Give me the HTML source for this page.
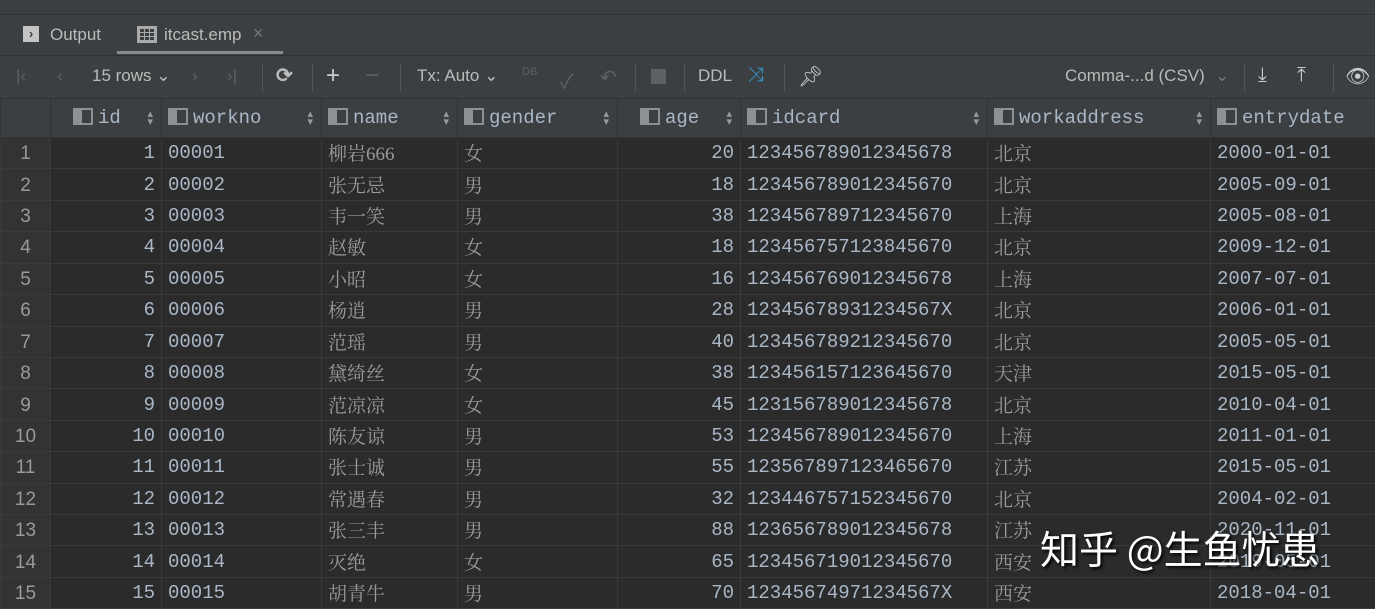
<!DOCTYPE html>
<html><head><meta charset="utf-8"><style>
*{margin:0;padding:0;box-sizing:border-box}
body{width:1375px;height:608px;background:#3c3f41;overflow:hidden;position:relative;font-family:"Liberation Sans","Noto Sans CJK SC",sans-serif;color:#a9b7c6}
.a{position:absolute}
.hl{position:absolute;left:0;width:1375px;height:1px;background:#323232}
.tb{font-size:17px;color:#bbbbbb;top:66px}
.sep{position:absolute;top:64px;width:1px;height:28px;background:#555}
table{position:absolute;left:0;top:98px;border-collapse:collapse;table-layout:fixed;width:1379px;font-family:"Liberation Mono","Noto Sans CJK SC",monospace;font-size:19px}
td,th{height:31.43px;border:1px solid #3a3a3a;padding:0 6px;white-space:nowrap;overflow:hidden;line-height:20px}
th{height:39px;background:#3c3f41;color:#a9b7c6;font-weight:normal;text-align:left;border-color:#333;position:relative}
td{background:#2b2b2b;color:#a9b7c6;padding-top:0}
td.g{background:#313335;text-align:center;padding:2px 0 0;color:#9a9a9a;font-family:"Liberation Sans",sans-serif;font-size:19px}
td.r{text-align:right}
td.c{font-family:"Liberation Serif","Noto Serif CJK SC",serif;color:#9a9a9a;padding-top:4px}
.ic{display:inline-block;width:20px;height:17px;vertical-align:-2px;margin-right:5px;background:linear-gradient(90deg,#8c9196 0 7px,transparent 7px);border:2px solid #8c9196}
.s{position:absolute;right:8px;top:12px;font-size:11px;color:#999;line-height:8px}
</style></head><body>
<div class="hl" style="top:14px;background:#2f3133"></div>
<div class="a" style="left:23px;top:26px;width:16px;height:16px;background:#c4c4c4;color:#3c3f41;font-size:13px;font-weight:bold;line-height:16px;text-align:center">›</div>
<div class="a" style="left:50px;top:25px;font-size:17px;color:#bbb">Output</div>
<div class="a" style="left:137px;top:26px;width:20px;height:17px;border:2px solid #aaa;background:repeating-linear-gradient(0deg,#aaa 0 1px,transparent 1px 4px),repeating-linear-gradient(90deg,#aaa 0 1px,transparent 1px 5px)"></div>
<div class="a" style="left:164px;top:25px;font-size:17px;color:#bbb">itcast.emp</div>
<div class="a" style="left:253px;top:23px;font-size:18px;color:#777">×</div>
<div class="a" style="left:117px;top:51px;width:166px;height:3px;background:#8a8d90"></div>
<div class="hl" style="top:55px"></div>
<div class="a tb" style="left:16px;color:#5e6163">|‹</div>
<div class="a tb" style="left:57px;color:#5e6163">‹</div>
<div class="a tb" style="left:92px">15 rows ⌄</div>
<div class="a tb" style="left:192px;color:#5e6163">›</div>
<div class="a tb" style="left:227px;color:#5e6163">›|</div>
<div class="sep" style="left:262px"></div>
<div class="a tb" style="left:276px;font-size:20px;top:63px;font-weight:bold">⟳</div>
<div class="sep" style="left:312px"></div>
<div class="a tb" style="left:326px;font-size:24px;top:62px;color:#ccc">+</div>
<div class="a tb" style="left:365px;font-size:24px;top:62px;color:#5e6163">−</div>
<div class="sep" style="left:400px"></div>
<div class="a tb" style="left:417px">Tx: Auto ⌄</div>
<div class="a tb" style="left:522px;font-size:11px;color:#5e6163;top:66px">DB</div>
<div class="a tb" style="left:560px;font-size:20px;color:#5e6163;top:65px">✓</div>
<div class="a tb" style="left:600px;font-size:20px;color:#5e6163;top:65px">↶</div>
<div class="sep" style="left:635px"></div>
<div class="a" style="left:651px;top:69px;width:15px;height:15px;background:#5e6163"></div>
<div class="sep" style="left:684px"></div>
<div class="a tb" style="left:698px">DDL</div>
<div class="a tb" style="left:748px;color:#3592c4;font-size:20px;top:64px">⤨</div>
<div class="sep" style="left:784px"></div>
<div class="a tb" style="left:798px;font-size:20px;top:64px;color:#ccc">📌︎</div>
<div class="a tb" style="left:1065px">Comma-...d (CSV)</div>
<div class="a tb" style="left:1215px;color:#777">⌄</div>
<div class="sep" style="left:1244px"></div>
<div class="a tb" style="left:1258px;font-size:20px;top:64px;color:#ccc">⤓</div>
<div class="a tb" style="left:1297px;font-size:20px;top:64px;color:#ccc">⤒</div>
<div class="sep" style="left:1333px"></div>
<div class="a tb" style="left:1345px;font-size:20px;top:64px;color:#ccc">👁︎</div>
<table>
<colgroup><col style="width:50px"><col style="width:111px"><col style="width:160px"><col style="width:136px"><col style="width:160px"><col style="width:123px"><col style="width:247px"><col style="width:223px"><col style="width:169px"></colgroup>
<tr><th></th><th style="padding-left:22px"><span class="ic"></span>id<span class="s">▴<br>▾</span></th><th><span class="ic"></span>workno<span class="s">▴<br>▾</span></th><th><span class="ic"></span>name<span class="s">▴<br>▾</span></th><th><span class="ic"></span>gender<span class="s">▴<br>▾</span></th><th style="padding-left:22px"><span class="ic"></span>age<span class="s">▴<br>▾</span></th><th><span class="ic"></span>idcard<span class="s">▴<br>▾</span></th><th><span class="ic"></span>workaddress<span class="s">▴<br>▾</span></th><th><span class="ic"></span>entrydate</th></tr>
<tr><td class="g">1</td><td class="r">1</td><td>00001</td><td class="c">柳岩666</td><td class="c">女</td><td class="r">20</td><td>123456789012345678</td><td class="c">北京</td><td>2000-01-01</td></tr>
<tr><td class="g">2</td><td class="r">2</td><td>00002</td><td class="c">张无忌</td><td class="c">男</td><td class="r">18</td><td>123456789012345670</td><td class="c">北京</td><td>2005-09-01</td></tr>
<tr><td class="g">3</td><td class="r">3</td><td>00003</td><td class="c">韦一笑</td><td class="c">男</td><td class="r">38</td><td>123456789712345670</td><td class="c">上海</td><td>2005-08-01</td></tr>
<tr><td class="g">4</td><td class="r">4</td><td>00004</td><td class="c">赵敏</td><td class="c">女</td><td class="r">18</td><td>123456757123845670</td><td class="c">北京</td><td>2009-12-01</td></tr>
<tr><td class="g">5</td><td class="r">5</td><td>00005</td><td class="c">小昭</td><td class="c">女</td><td class="r">16</td><td>123456769012345678</td><td class="c">上海</td><td>2007-07-01</td></tr>
<tr><td class="g">6</td><td class="r">6</td><td>00006</td><td class="c">杨逍</td><td class="c">男</td><td class="r">28</td><td>12345678931234567X</td><td class="c">北京</td><td>2006-01-01</td></tr>
<tr><td class="g">7</td><td class="r">7</td><td>00007</td><td class="c">范瑶</td><td class="c">男</td><td class="r">40</td><td>123456789212345670</td><td class="c">北京</td><td>2005-05-01</td></tr>
<tr><td class="g">8</td><td class="r">8</td><td>00008</td><td class="c">黛绮丝</td><td class="c">女</td><td class="r">38</td><td>123456157123645670</td><td class="c">天津</td><td>2015-05-01</td></tr>
<tr><td class="g">9</td><td class="r">9</td><td>00009</td><td class="c">范凉凉</td><td class="c">女</td><td class="r">45</td><td>123156789012345678</td><td class="c">北京</td><td>2010-04-01</td></tr>
<tr><td class="g">10</td><td class="r">10</td><td>00010</td><td class="c">陈友谅</td><td class="c">男</td><td class="r">53</td><td>123456789012345670</td><td class="c">上海</td><td>2011-01-01</td></tr>
<tr><td class="g">11</td><td class="r">11</td><td>00011</td><td class="c">张士诚</td><td class="c">男</td><td class="r">55</td><td>123567897123465670</td><td class="c">江苏</td><td>2015-05-01</td></tr>
<tr><td class="g">12</td><td class="r">12</td><td>00012</td><td class="c">常遇春</td><td class="c">男</td><td class="r">32</td><td>123446757152345670</td><td class="c">北京</td><td>2004-02-01</td></tr>
<tr><td class="g">13</td><td class="r">13</td><td>00013</td><td class="c">张三丰</td><td class="c">男</td><td class="r">88</td><td>123656789012345678</td><td class="c">江苏</td><td>2020-11-01</td></tr>
<tr><td class="g">14</td><td class="r">14</td><td>00014</td><td class="c">灭绝</td><td class="c">女</td><td class="r">65</td><td>123456719012345670</td><td class="c">西安</td><td>2019-05-01</td></tr>
<tr><td class="g">15</td><td class="r">15</td><td>00015</td><td class="c">胡青牛</td><td class="c">男</td><td class="r">70</td><td>12345674971234567X</td><td class="c">西安</td><td>2018-04-01</td></tr>
</table>
<div class="a" style="left:1040px;top:523px;font-size:39px;color:#fff;font-family:'Noto Sans CJK SC',sans-serif;text-shadow:2px 2px 3px #000;line-height:50px">知乎 @生鱼忧患</div>
</body></html>
